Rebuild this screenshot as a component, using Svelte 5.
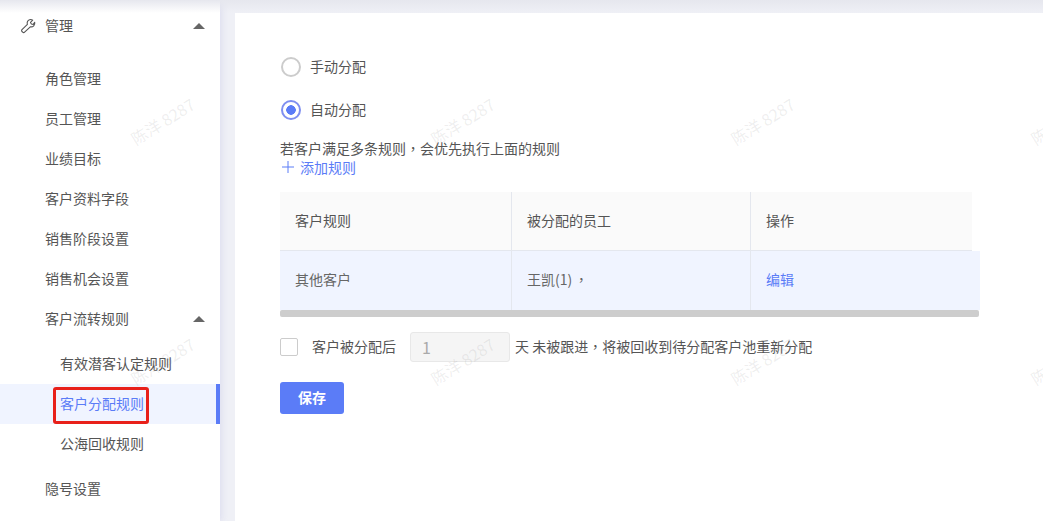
<script>
	const menu = ['角色管理', '员工管理', '业绩目标', '客户资料字段', '销售阶段设置', '销售机会设置'];
	const subMenu = [
		{ label: '有效潜客认定规则' },
		{ label: '客户分配规则', active: true },
		{ label: '公海回收规则' }
	];
	const marks = [
		[127, 109], [427, 109], [727, 109], [1027, 109],
		[127, 349], [427, 349], [727, 349], [1027, 349]
	];
</script>

<div class="page">
	<aside class="sidebar">
		<div class="group-title">
			<svg class="wrench" width="16" height="16" viewBox="0 0 16 16" fill="none" stroke="#555" stroke-width="1.1" stroke-linejoin="round">
				<path d="M9.6 1.7a3.6 3.6 0 0 1 3.1.5L10.5 4.4l.9 1.6 1.8.4 1.5-2.1a3.7 3.7 0 0 1-4.4 4.5L4.6 14.2a1.3 1.3 0 0 1-1.9 0l-.7-.7a1.3 1.3 0 0 1 0-1.9l5.4-5.2a3.6 3.6 0 0 1 2.2-4.7z" />
			</svg>
			<span>管理</span>
			<i class="caret"></i>
		</div>
		<nav class="menu">
			{#each menu as item}
				<div class="item">{item}</div>
			{/each}
			<div class="item has-caret">客户流转规则<i class="caret"></i></div>
			<div class="sub">
				{#each subMenu as item}
					<div class="sub-item" class:active={item.active}>
						{item.label}
						{#if item.active}<span class="red-box"></span>{/if}
					</div>
				{/each}
			</div>
			<div class="item">隐号设置</div>
		</nav>
	</aside>

	<main class="panel">
		<label class="radio"><span class="dot"></span><span class="radio-text">手动分配</span></label>
		<label class="radio checked"><span class="dot"></span><span class="radio-text">自动分配</span></label>

		<p class="hint">若客户满足多条规则<span class="comma">，</span>会优先执行上面的规则</p>
		<div class="add">
			<svg width="12" height="12" viewBox="0 0 12 12" stroke="#5b7cf7" stroke-width="1"><path d="M6 0v12M0 6h12" /></svg>
			<span>添加规则</span>
		</div>

		<div class="table">
			<div class="row head">
				<div class="cell">客户规则</div>
				<div class="cell">被分配的员工</div>
				<div class="cell">操作</div>
			</div>
			<div class="row body">
				<div class="cell">其他客户</div>
				<div class="cell">王凯(1)<span class="comma after-paren">，</span></div>
				<div class="cell link">编辑</div>
			</div>
			<div class="scrollbar"></div>
		</div>

		<div class="recycle">
			<span class="checkbox"></span>
			<span class="after">客户被分配后</span>
			<span class="input">1</span>
			<span class="days">天 未被跟进<span class="comma">，</span>将被回收到待分配客户池重新分配</span>
		</div>

		<button class="save">保存</button>
	</main>

	{#each marks as [x, y]}
		<span class="mark" style="left: {x}px; top: {y}px">陈洋 8287</span>
	{/each}
</div>

<style>
	:global(body) {
		margin: 0;
	}

	.page {
		position: relative;
		display: flex;
		width: 1043px;
		height: 521px;
		overflow: hidden;
		background: #eff0f6;
		font-family: "Noto Sans CJK SC", "Noto Sans", sans-serif;
		font-size: 14px;
		color: #555;
	}

	.page::before {
		content: '';
		position: absolute;
		left: 0;
		right: 0;
		top: 0;
		height: 13px;
		background: linear-gradient(#e6e7ee, rgba(238, 240, 247, 0));
		z-index: 1;
	}

	.comma {
		font-family: "Noto Sans CJK TC", sans-serif;
	}

	.after-paren {
		margin-left: 2px;
	}

	.sidebar {
		flex: none;
		width: 220px;
		height: 521px;
		background: #fff;
		box-shadow: 2px 0 6px rgba(190, 190, 225, 0.35);
	}

	.group-title {
		box-sizing: border-box;
		display: flex;
		align-items: center;
		height: 52px;
		padding: 0 15px 2px 20px;
		color: #555;
	}

	.wrench {
		margin: 2px 9px 0 0;
	}

	.caret {
		width: 0;
		height: 0;
		margin-left: auto;
		margin-top: 2px;
		border-left: 6px solid transparent;
		border-right: 6px solid transparent;
		border-bottom: 6px solid #666;
	}

	.menu {
		padding-top: 7px;
	}

	.item {
		box-sizing: border-box;
		display: flex;
		align-items: center;
		height: 40px;
		padding: 0 15px 2px 45px;
	}

	.sub {
		padding: 5px 0;
	}

	.sub-item {
		box-sizing: border-box;
		position: relative;
		display: flex;
		align-items: center;
		height: 40px;
		padding: 0 0 2px 60px;
	}

	.sub-item.active {
		background: #f0f4ff;
		color: #5b7cf7;
		border-right: 4px solid #5b7cf7;
	}

	.red-box {
		position: absolute;
		left: 53px;
		top: 3px;
		width: 90px;
		height: 31px;
		border: 3px solid #e8201a;
		border-radius: 3px;
	}

	.panel {
		flex: 1;
		margin: 13px 0 0 15px;
		padding: 44px 0 0 45px;
		background: #fff;
	}

	.radio {
		display: flex;
		align-items: center;
		gap: 9px;
		height: 20px;
		margin-bottom: 23px;
		padding-left: 1px;
	}

	.radio-text {
		padding-bottom: 2px;
	}

	.dot {
		box-sizing: border-box;
		width: 20px;
		height: 20px;
		border: 2px solid #ccc;
		border-radius: 50%;
	}

	.checked .dot {
		border-color: #7f8ff0;
		background: radial-gradient(circle, #5b7cf7 0 4.5px, #fff 5px);
	}

	.hint {
		margin: -5px 0 0;
		height: 20px;
		line-height: 20px;
		color: #555;
	}

	.add {
		display: flex;
		align-items: center;
		gap: 6px;
		height: 18px;
		padding-left: 2px;
		color: #5b7cf7;
	}

	.table {
		width: 700px;
		margin-top: 16px;
	}

	.row {
		display: grid;
		grid-template-columns: 232px 239px 1fr;
		height: 59px;
	}

	.head {
		width: 692px;
		background: #fafafa;
		border-bottom: 1px solid #e4e7ee;
		box-sizing: border-box;
	}

	.body {
		background: #f0f4ff;
		color: #666;
	}

	.cell {
		display: flex;
		align-items: center;
		padding: 0 0 3px 15px;
		border-right: 1px solid #e4e7ee;
	}

	.cell:last-child {
		border-right: 0;
	}

	.link {
		color: #5b7cf7;
	}

	.scrollbar {
		width: 699px;
		height: 7px;
		background: #cdcdcd;
		border-radius: 2px;
	}

	.recycle {
		display: flex;
		align-items: center;
		height: 30px;
		margin-top: 15px;
	}

	.checkbox {
		box-sizing: border-box;
		width: 18px;
		height: 18px;
		border: 1px solid #ccc;
		border-radius: 2px;
	}

	.after {
		margin-left: 14px;
		padding-bottom: 2px;
	}

	.input {
		box-sizing: border-box;
		width: 100px;
		height: 30px;
		margin: 0 5px 0 14px;
		padding-left: 11px;
		font-size: 16px;
		line-height: 28px;
		background: #f5f5f5;
		border: 1px solid #e8e8e8;
		border-radius: 3px;
		color: #aaa;
	}

	.days {
		padding-bottom: 2px;
	}

	.save {
		display: block;
		width: 64px;
		height: 32px;
		margin-top: 20px;
		padding: 0 0 2px;
		background: #5b7cf7;
		border: 0;
		border-radius: 3px;
		color: #fff;
		font: 700 14px "Noto Sans CJK SC", sans-serif;
	}

	.mark {
		position: absolute;
		z-index: 2;
		transform: rotate(-32deg);
		font-size: 16px;
		white-space: nowrap;
		color: rgba(120, 120, 120, 0.13);
		pointer-events: none;
	}
</style>
